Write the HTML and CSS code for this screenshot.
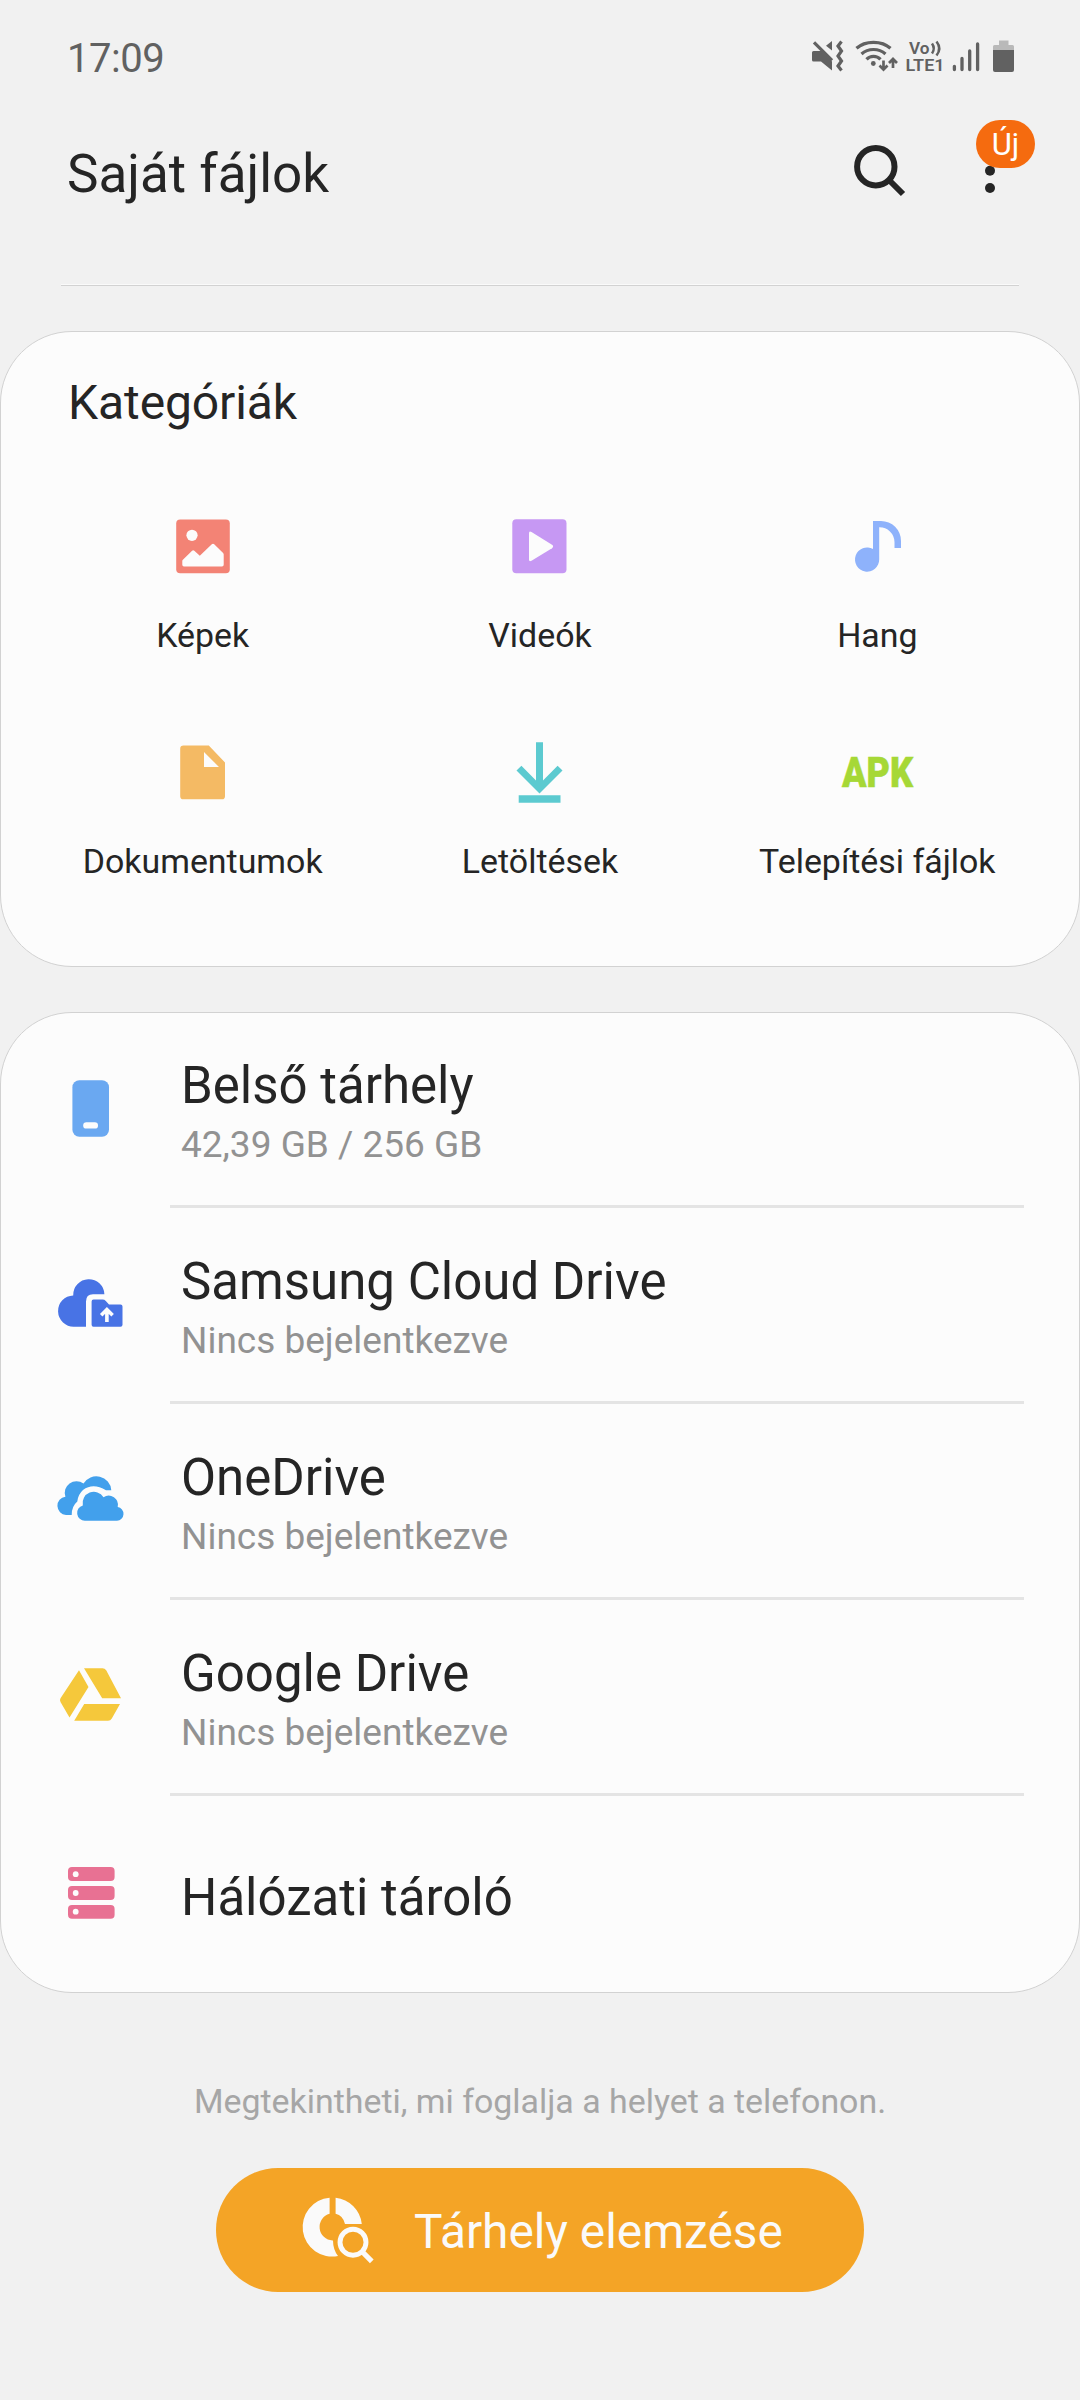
FILE: index.html
```html
<!DOCTYPE html>
<html lang="hu">
<head>
<meta charset="utf-8">
<title>Saját fájlok</title>
<link rel="stylesheet" href="styles.css">
</head>
<body>
<div class="status-bar">
  <span class="clock">17:09</span>
  <div class="status-icons">
    <svg width="34" height="36" viewBox="811 38 34 36"><path fill="#616161" d="M813.5 51H821.5L832 61.5V70.5L821 61.5H813.5Q812 61.5 812 60V52.5Q812 51 813.5 51ZM832 41V50.5L826 45.8Z"/><path d="M814 42.3L832 60.3M841.5 41.5L838 46L841.5 51L838 56L841.5 61L838 66L841.5 70.5" fill="none" stroke="#616161" stroke-width="3.2"/></svg>
    <svg class="wifi" width="44" height="36" viewBox="855 38 44 36"><g fill="none" stroke="#616161" stroke-width="3.2"><path d="M856.5 48.3Q863 42.3 873.5 42.3Q884 42.3 890.5 48.3"/><path d="M861.5 54Q866.5 49.5 873.5 49.5Q880.5 49.5 885.5 54"/><path d="M866.5 59.3Q869.3 56.3 873.5 56.3Q877.7 56.3 880.5 59.3"/><path stroke-width="2.7" d="M883.5 60.5V69.5M879.5 65.5L883.5 69.5L887.5 65.5M893 68V59.5M889 63L893 59L897 63"/></g><circle cx="873.3" cy="63.5" r="2.4" fill="#616161"/></svg>
    <svg class="volte" width="42" height="36" viewBox="905 38 42 36"><text x="909" y="53.9" textLength="20.5" lengthAdjust="spacingAndGlyphs" class="net-label">Vo</text><path d="M932 43.5Q935.5 48.5 932 53.5M936.5 41.5Q942 48.5 936.5 55.5" fill="none" stroke="#616161" stroke-width="2.5"/><text x="905.5" y="71.3" textLength="39" lengthAdjust="spacingAndGlyphs" class="net-label">LTE1</text></svg>
    <svg class="signal" width="28" height="36" viewBox="952 38 28 36"><path d="M954.4 66.3V69.5M962 58.5V69.5M969.7 51V69.5M977.6 44V69.5" stroke="#616161" stroke-width="3.3" stroke-linecap="round"/></svg>
    <svg class="battery" width="22" height="36" viewBox="993 38 22 36"><path d="M999 40.5H1008.5V45H1012.5Q1014 45 1014 46.5V51H993V46.5Q993 45 994.5 45H999Z" fill="#b9b9b9"/><path d="M993 50H1014V70Q1014 72 1012 72H995Q993 72 993 70Z" fill="#616161"/></svg>
  </div>
</div>

<header class="app-bar">
  <h1>Saját fájlok</h1>
  <svg class="search" width="56" height="56" viewBox="851 142 56 56"><g fill="none" stroke="#252525" stroke-width="6"><circle cx="875.8" cy="166.7" r="18.7"/><path d="M889 180L903 194"/></g></svg>
  <div class="more">
    <svg width="12" height="48" viewBox="984 148 12 48"><g fill="#252525"><circle cx="990" cy="153.6" r="5"/><circle cx="990" cy="170.8" r="5"/><circle cx="990" cy="188" r="5"/></g></svg>
    <span class="badge">Új</span>
  </div>
</header>
<div class="separator"></div>

<section class="card categories">
  <h2>Kategóriák</h2>
  <div class="grid">
    <div class="category"><svg viewBox="162.5 506 80 80"><rect x="175.7" y="519.6" width="53.6" height="53.6" rx="4" fill="#f38375"/><g fill="#fcfcfc"><circle cx="191.5" cy="535.3" r="5.6"/><path d="M181.8 561Q181.8 560.3 182.4 559.7L191.6 550.7Q192.7 549.6 193.8 550.7L199.3 555.7L211.3 544.2Q212.5 543.1 213.7 544.2L222.6 553Q223.2 553.6 223.2 554.4V564.8Q223.2 566.5 221.5 566.5H183.5Q181.8 566.5 181.8 564.8Z"/></g></svg><span>Képek</span></div>
    <div class="category"><svg viewBox="500 506 80 80"><rect x="512.3" y="519.3" width="54.2" height="54" rx="4" fill="#c698f3"/><path d="M529 533.2Q529 530.5 531.5 532L552 544.8Q554.3 546.5 552 548.2L531.5 560.7Q529 562 529 559.5Z" fill="#fcfcfc"/></svg><span>Videók</span></div>
    <div class="category"><svg viewBox="837 506 80 80"><path fill="#8eb2fb" d="M873 521H881A20 20 0 0 1 901 541V548H894.5V542A15 15 0 0 0 879.2 527.2V559.5A12.1 12.1 0 1 1 873 549Z"/></svg><span>Hang</span></div>
    <div class="category"><svg viewBox="163 732 80 80"><path fill="#f4ba64" fill-rule="evenodd" d="M183.5 745.6H208.8L225 762.5V796.2Q225 799.3 222 799.3H183.2Q180.2 799.3 180.2 796.2V748.8Q180.2 745.6 183.5 745.6ZM204 752V767H219Z"/></svg><span>Dokumentumok</span></div>
    <div class="category"><svg viewBox="500 732 80 80"><path fill="#5ccad0" d="M536 742.3H543V780.5L557.6 765.7L562.5 770.5L539.5 793.5L516.5 770.5L521.4 765.7L536 780.5ZM518.7 795.3H560.5V802.7H518.7Z"/></svg><span>Letöltések</span></div>
    <div class="category"><svg viewBox="837 732 80 80"><text class="apk" x="842" y="787.4" textLength="71" lengthAdjust="spacingAndGlyphs">APK</text></svg><span>Telepítési fájlok</span></div>
  </div>
</section>

<section class="card storage">
  <div class="row"><svg viewBox="54 1072 72 72"><rect x="72.4" y="1080.3" width="36.6" height="56.4" rx="7" fill="#6aa8f1"/><rect x="83.2" y="1122.2" width="14.8" height="6.4" rx="3.2" fill="#fcfcfc"/></svg>
    <div class="row-text"><h3>Belső tárhely</h3><p>42,39 GB / 256 GB</p></div></div>
  <div class="row"><svg viewBox="54 1268 72 72"><path fill="#4873e5" d="M74.2 1326.7A15.6 15.6 0 0 1 73.2 1295.4A15.6 15.6 0 0 1 104.4 1294.2H93Q86 1294.2 86 1301.5V1326.7ZM93.5 1299.6H102.5Q104.5 1299.6 105.8 1301L109 1304.5H120.5Q122.5 1304.5 122.5 1306.5V1324.7Q122.5 1326.7 120.5 1326.7H93.5Q91.6 1326.7 91.6 1324.7V1301.5Q91.6 1299.6 93.5 1299.6Z"/><path d="M106.9 1322V1310.5M101.2 1315.3L106.9 1309.6L112.6 1315.3" fill="none" stroke="#fcfcfc" stroke-width="3.6"/></svg>
    <div class="row-text"><h3>Samsung Cloud Drive</h3><p>Nincs bejelentkezve</p></div></div>
  <div class="row"><svg viewBox="54 1464 72 72"><path fill="#42a0ec" d="M66 1515A9.2 9.2 0 0 1 65.4 1496.7A11.7 11.7 0 0 1 83.5 1483.5A15 15 0 0 1 111.3 1490.2H106Q93 1482.5 83 1490Q78 1494.5 77.3 1501.5Q71.5 1506.5 71.7 1515Z"/><path fill="#42a0ec" d="M84.8 1520.7A7.8 7.8 0 0 1 82.8 1505.4A11.3 11.3 0 0 1 103.5 1497.2A9.3 9.3 0 0 1 117.7 1507A6.9 6.9 0 0 1 117 1520.7Z"/></svg>
    <div class="row-text"><h3>OneDrive</h3><p>Nincs bejelentkezve</p></div></div>
  <div class="row"><svg viewBox="54 1660 72 72"><path fill="#f5c83b" d="M79 1670.3L88.5 1687L69.5 1717.5L60.5 1702Q59.5 1700 60.5 1698.2ZM84 1668.2H102.5Q104.8 1668.2 106.2 1670.3L121 1698.3H102.2ZM84.2 1704H120L111.8 1718.5Q110.5 1720.7 108 1720.7H74.2Z"/></svg>
    <div class="row-text"><h3>Google Drive</h3><p>Nincs bejelentkezve</p></div></div>
  <div class="row single"><svg viewBox="54 1856 72 72"><g fill="#e87193"><rect x="68" y="1867" width="46.6" height="14" rx="4"/><rect x="68" y="1886" width="46.6" height="14" rx="4"/><rect x="68" y="1905" width="46.6" height="13.8" rx="4"/></g><g fill="#fcfcfc"><circle cx="75.7" cy="1874.2" r="2.9"/><circle cx="75.7" cy="1893" r="2.9"/><circle cx="75.7" cy="1911.7" r="2.9"/></g></svg>
    <div class="row-text"><h3>Hálózati tároló</h3></div></div>
</section>

<footer>
  <p>Megtekintheti, mi foglalja a helyet a telefonon.</p>
  <button class="analyze" type="button">
    <svg width="72" height="68" viewBox="302 2195 72 68"><path fill="#fafafa" d="M329.6 2196.7V2212.8A13.6 13.6 0 0 0 332.5 2239.5H333Q333 2248.5 338 2255A29.5 29.5 0 1 1 329.6 2196.7ZM335.6 2196.7A29.5 29.5 0 0 1 361.8 2223H345Q343 2214.5 335.6 2212.8Z"/><g fill="none" stroke="#fafafa"><circle cx="353" cy="2241.2" r="13" stroke-width="4.9"/><path d="M362 2250.5L371.8 2260.3" stroke-width="5.2"/></g></svg>
    <span>Tárhely elemzése</span>
  </button>
</footer>
</body>
</html>
```
FILE: styles.css
```css
* { box-sizing: border-box; }
body { margin: 0; width: 1080px; height: 2400px; background: #f1f1f1; color: #252525; font-family: Roboto, sans-serif; overflow: hidden; }
h1, h2, h3, p { margin: 0; font-weight: 400; white-space: nowrap; }
svg { display: block; flex: none; overflow: visible; }

.status-bar { height: 116px; padding: 0 65px 0 67px; display: flex; justify-content: space-between; align-items: center; }
.clock { font-size: 40px; line-height: 48px; color: #616161; letter-spacing: -0.5px; padding-top: 2px; }
.status-icons { display: flex; margin-bottom: 4px; }
.wifi { margin-left: 10px; }
.volte { margin-left: 6px; }
.signal { margin-left: 5px; }
.battery { margin-left: 13px; }
.net-label { font-size: 17.3px; font-weight: 600; fill: #616161; }

.app-bar { height: 116px; padding-left: 67px; display: flex; align-items: center; }
h1 { font-size: 53px; line-height: 60px; width: 784px; padding-bottom: 1px; }
.search { margin-top: -8px; }
.more { position: relative; margin: -4px 0 0 77px; }
.badge { position: absolute; left: -8px; top: -28px; width: 59px; height: 48px; border-radius: 24px; background: #f56b0f; color: #fff; font-size: 31px; line-height: 50px; text-align: center; }
.separator { height: 2px; margin: 52px 61px 45px; border-top: 1px solid #fafafa; border-bottom: 1px solid #d2d2d2; }

.card { background: #fcfcfc; border: 1px solid #d2d2d2; border-radius: 72px; }
.categories { height: 636px; padding: 41px 33px 0; }
h2 { font-size: 48px; line-height: 60px; margin-left: 34px; letter-spacing: -0.1px; }
.grid { display: grid; grid-template-columns: repeat(3, 1fr); margin-top: 73px; }
.category { height: 226px; display: flex; flex-direction: column; align-items: center; gap: 27px; }
.category svg { width: 80px; height: 80px; }
.category span { font-size: 33.9px; line-height: 46px; white-space: nowrap; }
.apk { font-size: 42.5px; font-weight: 900; fill: #a6d836; stroke: #a6d836; stroke-width: 0.5px; }

.storage { height: 981px; margin-top: 45px; padding: 0 55px 0 53px; }
.row { height: 196px; display: flex; }
.row:first-child { margin-top: -1px; }
.row > svg { width: 72px; height: 72px; margin-top: 60px; }
.row-text { flex: 1; margin-left: 44px; padding: 41px 0 0 11px; border-bottom: 3px solid #e4e4e4; }
.single .row-text { border: 0; padding-top: 69px; }
h3 { font-size: 51px; line-height: 66px; }
.row p { font-size: 37px; line-height: 50px; margin-top: 1px; color: #929292; }

footer { display: flex; flex-direction: column; align-items: center; padding-top: 86px; }
footer p { font-size: 33.9px; line-height: 46px; color: #a6a6a6; }
.analyze { width: 648px; height: 124px; margin-top: 43px; padding: 0 0 0 86px; border: 0; border-radius: 62px; background: #f4a426; color: #fafafa; font: 400 47.8px/60px Roboto, sans-serif; display: flex; align-items: center; gap: 40px; white-space: nowrap; }
.analyze span { padding-top: 3px; }
```
